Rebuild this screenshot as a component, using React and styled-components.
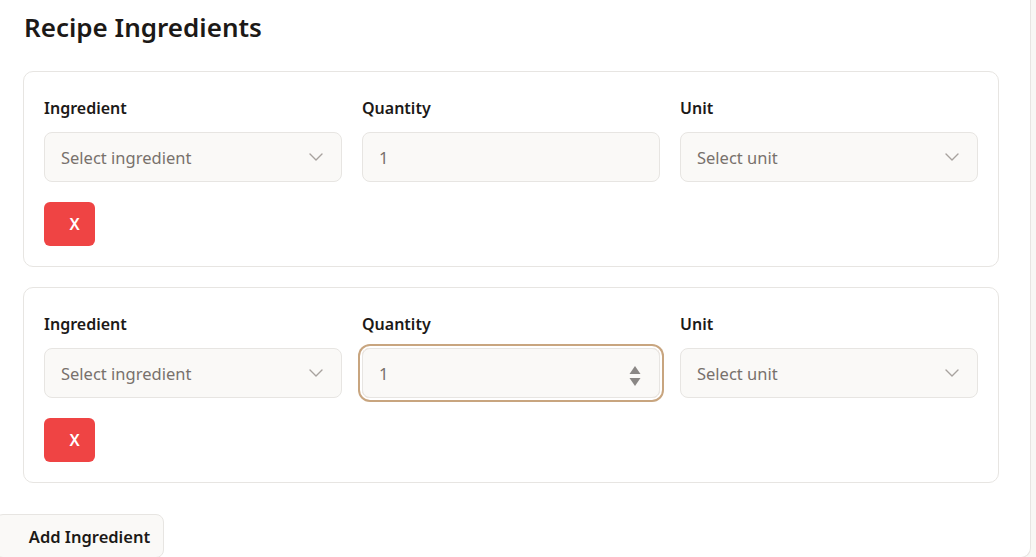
import React from 'react';
import styled, { createGlobalStyle, css } from 'styled-components';

const GlobalStyle = createGlobalStyle`
  html, body {
    margin: 0;
    padding: 0;
    background: #f8f7f4;
    overflow: hidden;
  }
  body {
    font-family: "Noto Sans", "Open Sans", sans-serif;
    color: #1c1917;
  }
  * {
    box-sizing: border-box;
  }
`;

const Panel = styled.main`
  width: 1031px;
  height: 558px;
  background: #ffffff;
  border-right: 1px solid #e7e5e2;
  border-bottom: 1px solid #e7e5e2;
  border-bottom-right-radius: 10px;
  padding: 0 31px 0 23px;
  overflow: hidden;
`;

const Title = styled.h2`
  margin: 0;
  padding: 10px 0 26px 1px;
  font-size: 26px;
  line-height: 35px;
  font-weight: 600;
`;

const Card = styled.section`
  border: 1px solid #e7e5e2;
  border-radius: 10px;
  padding: 20px;
  margin-bottom: 20px;
`;

const Fields = styled.div`
  display: grid;
  grid-template-columns: repeat(3, 1fr);
  column-gap: 20px;
  margin-bottom: 20px;
`;

const Field = styled.div`
  display: flex;
  flex-direction: column;
`;

const Label = styled.label`
  font-size: 16px;
  line-height: 24px;
  font-weight: 600;
  padding-top: 4px;
  margin-bottom: 12px;
`;

const boxStyle = css`
  height: 50px;
  width: 100%;
  border: 1px solid #e7e5e2;
  border-radius: 8px;
  background: #faf9f7;
  padding: 0 16px;
  font-family: inherit;
  font-size: 16.5px;
  color: #78716c;
`;

const SelectBox = styled.button`
  ${boxStyle}
  display: flex;
  align-items: center;
  justify-content: space-between;
  padding-right: 13px;
  text-align: left;
  cursor: pointer;
`;

const InputWrap = styled.div`
  position: relative;
  border-radius: 8px;
  box-shadow: ${p => p.focused ? '0 0 0 2px #ffffff, 0 0 0 4px #c8a57f' : 'none'};
`;

const NumberInput = styled.input`
  ${boxStyle}
  outline: none;
  -moz-appearance: textfield;
  &::-webkit-inner-spin-button,
  &::-webkit-outer-spin-button {
    -webkit-appearance: none;
    margin: 0;
  }
`;

const Spinner = styled.svg`
  position: absolute;
  right: 19px;
  top: 17px;
`;

const RemoveButton = styled.button`
  height: 44px;
  width: 51px;
  border: none;
  border-radius: 6px;
  background: #ef4444;
  color: #ffffff;
  font-family: inherit;
  font-size: 16px;
  font-weight: 600;
  padding: 0 0 0 10px;
  cursor: pointer;
`;

const Footer = styled.div`
  padding-top: 11px;
  margin-left: -28px;
`;

const AddButton = styled.button`
  height: 44px;
  width: 169px;
  border: 1px solid #e7e5e2;
  border-radius: 8px;
  background: #faf9f7;
  color: #1c1917;
  font-family: inherit;
  font-size: 16.5px;
  font-weight: 600;
  padding: 0 0 0 20px;
  cursor: pointer;
`;

function Chevron() {
  return (
    <svg width="24" height="24" viewBox="0 0 24 24" fill="none" stroke="#a8a29e" strokeWidth="1.4" strokeLinecap="round" strokeLinejoin="round">
      <path d="m6 9 6 6 6-6" />
    </svg>
  );
}

function Select({ placeholder }) {
  return (
    <SelectBox type="button">
      <span>{placeholder}</span>
      <Chevron />
    </SelectBox>
  );
}

function IngredientRow({ focused }) {
  return (
    <Card>
      <Fields>
        <Field>
          <Label>Ingredient</Label>
          <Select placeholder="Select ingredient" />
        </Field>
        <Field>
          <Label>Quantity</Label>
          <InputWrap focused={focused}>
            <NumberInput type="number" defaultValue={1} />
            {focused && (
              <Spinner width="12" height="22" viewBox="0 0 12 22">
                <path d="M6 1 L11.5 9 L0.5 9 Z" fill="#8a8785" />
                <path d="M0.5 13 L11.5 13 L6 21 Z" fill="#8a8785" />
              </Spinner>
            )}
          </InputWrap>
        </Field>
        <Field>
          <Label>Unit</Label>
          <Select placeholder="Select unit" />
        </Field>
      </Fields>
      <RemoveButton type="button">X</RemoveButton>
    </Card>
  );
}

export default function App() {
  return (
    <>
      <GlobalStyle />
      <Panel>
        <Title>Recipe Ingredients</Title>
        <IngredientRow />
        <IngredientRow focused />
        <Footer>
          <AddButton type="button">Add Ingredient</AddButton>
        </Footer>
      </Panel>
    </>
  );
}
